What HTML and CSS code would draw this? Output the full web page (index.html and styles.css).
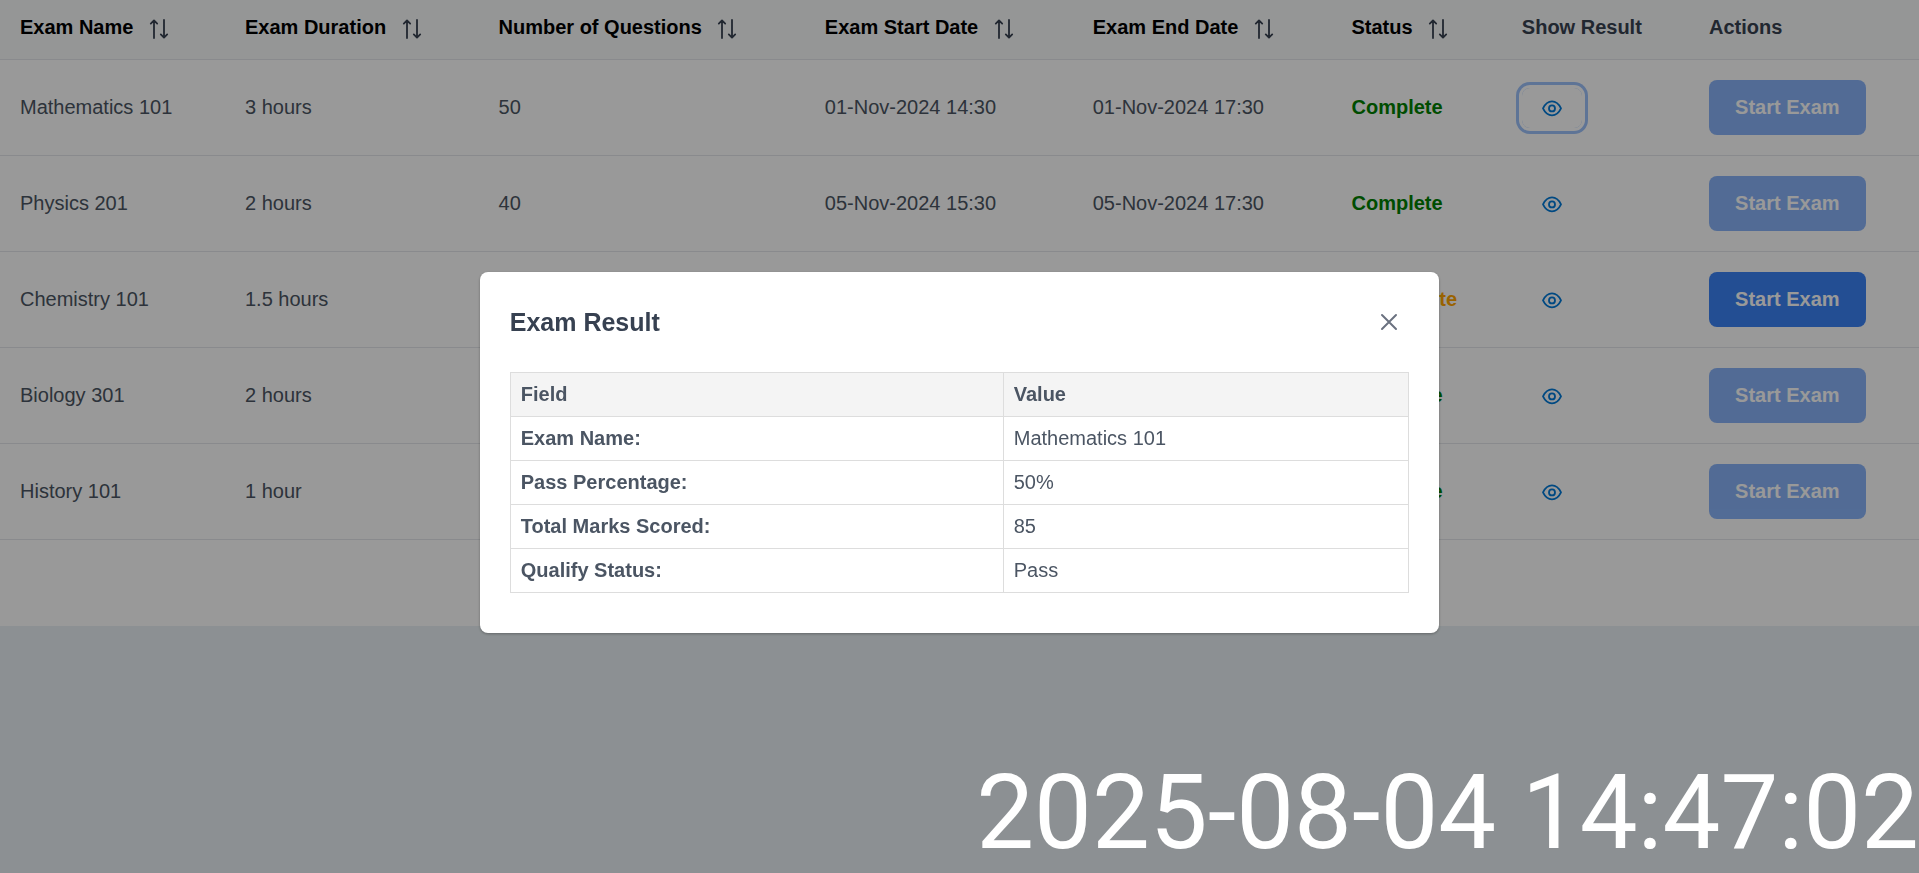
FILE: index.html
```html
<!DOCTYPE html>
<html lang="en">
<head>
    <meta charset="UTF-8">
    <meta name="viewport" content="width=device-width, initial-scale=1.0">
    <title>Exams</title>
    <link rel="stylesheet" href="styles.css">
</head>
<body>
    <!-- Shared icons -->
    <svg class="icon-defs" aria-hidden="true">
        <symbol id="icon-sort" viewBox="0 0 20 20">
            <path d="M5 19V1.6M1.8 4.6L5 1.4L8.2 4.6M15 1V18.4M11.8 15.4L15 18.6L18.2 15.4"/>
        </symbol>
        <symbol id="icon-eye" viewBox="0 0 20 20">
            <path d="M1 10.4C3.2 5.8 6.4 3.4 10 3.4S16.8 5.8 19 10.4C16.8 15 13.6 17.4 10 17.4S3.2 15 1 10.4Z"/>
            <circle cx="10" cy="10.4" r="3"/>
        </symbol>
        <symbol id="icon-close" viewBox="0 0 20 20">
            <path d="M3 3L17 17M17 3L3 17"/>
        </symbol>
    </svg>

    <!-- Exam list -->
    <main class="exam-list">
        <table class="exam-table">
            <thead>
                <tr>
                    <th class="sortable">Exam Name <svg class="sort-icon"><use href="#icon-sort"/></svg></th>
                    <th class="sortable">Exam Duration <svg class="sort-icon"><use href="#icon-sort"/></svg></th>
                    <th class="sortable">Number of Questions <svg class="sort-icon"><use href="#icon-sort"/></svg></th>
                    <th class="sortable">Exam Start Date <svg class="sort-icon"><use href="#icon-sort"/></svg></th>
                    <th class="sortable">Exam End Date <svg class="sort-icon"><use href="#icon-sort"/></svg></th>
                    <th class="sortable">Status <svg class="sort-icon"><use href="#icon-sort"/></svg></th>
                    <th>Show Result</th>
                    <th>Actions</th>
                </tr>
            </thead>
            <tbody>
                <tr>
                    <td>Mathematics 101</td>
                    <td>3 hours</td>
                    <td>50</td>
                    <td>01-Nov-2024 14:30</td>
                    <td>01-Nov-2024 17:30</td>
                    <td class="status complete">Complete</td>
                    <td><button class="view-button active" aria-label="Show result"><svg class="eye-icon"><use href="#icon-eye"/></svg></button></td>
                    <td><button class="start-button" disabled>Start Exam</button></td>
                </tr>
                <tr>
                    <td>Physics 201</td>
                    <td>2 hours</td>
                    <td>40</td>
                    <td>05-Nov-2024 15:30</td>
                    <td>05-Nov-2024 17:30</td>
                    <td class="status complete">Complete</td>
                    <td><button class="view-button" aria-label="Show result"><svg class="eye-icon"><use href="#icon-eye"/></svg></button></td>
                    <td><button class="start-button" disabled>Start Exam</button></td>
                </tr>
                <tr>
                    <td>Chemistry 101</td>
                    <td>1.5 hours</td>
                    <td>30</td>
                    <td>10-Nov-2024 14:30</td>
                    <td>10-Nov-2024 16:00</td>
                    <td class="status incomplete">Incomplete</td>
                    <td><button class="view-button" aria-label="Show result"><svg class="eye-icon"><use href="#icon-eye"/></svg></button></td>
                    <td><button class="start-button">Start Exam</button></td>
                </tr>
                <tr>
                    <td>Biology 301</td>
                    <td>2 hours</td>
                    <td>45</td>
                    <td>12-Nov-2024 14:30</td>
                    <td>12-Nov-2024 16:30</td>
                    <td class="status complete">Complete</td>
                    <td><button class="view-button" aria-label="Show result"><svg class="eye-icon"><use href="#icon-eye"/></svg></button></td>
                    <td><button class="start-button" disabled>Start Exam</button></td>
                </tr>
                <tr>
                    <td>History 101</td>
                    <td>1 hour</td>
                    <td>25</td>
                    <td>15-Nov-2024 14:30</td>
                    <td>15-Nov-2024 15:30</td>
                    <td class="status complete">Complete</td>
                    <td><button class="view-button" aria-label="Show result"><svg class="eye-icon"><use href="#icon-eye"/></svg></button></td>
                    <td><button class="start-button" disabled>Start Exam</button></td>
                </tr>
            </tbody>
        </table>
    </main>

    <!-- Result dialog -->
    <div class="overlay">
        <div class="dialog" role="dialog" aria-modal="true" aria-labelledby="dialogTitle">
            <div class="dialog-header">
                <h2 id="dialogTitle">Exam Result</h2>
                <button class="close-button" aria-label="Close"><svg class="close-icon"><use href="#icon-close"/></svg></button>
            </div>
            <table class="result-table">
                <thead>
                    <tr><th>Field</th><th>Value</th></tr>
                </thead>
                <tbody>
                    <tr><td><strong>Exam Name:</strong></td><td>Mathematics 101</td></tr>
                    <tr><td><strong>Pass Percentage:</strong></td><td>50%</td></tr>
                    <tr><td><strong>Total Marks Scored:</strong></td><td>85</td></tr>
                    <tr><td><strong>Qualify Status:</strong></td><td>Pass</td></tr>
                </tbody>
            </table>
        </div>
    </div>

    <time class="timestamp" datetime="2025-08-04T14:47:02">2025-08-04 14:47:02</time>
</body>
</html>
```

FILE: styles.css
```css
body {
    margin: 0;
    background-color: #e9f1f5;
    color: #4b5563;
    font-family: Arial, "Liberation Sans", sans-serif;
    font-size: 20px;
    overflow: hidden;
}
button {
    font-family: inherit;
    font-size: 20px;
    border: none;
    border-radius: 8px;
    cursor: pointer;
}
svg {
    fill: none;
    stroke: currentColor;
    stroke-linecap: round;
    stroke-linejoin: round;
}
.icon-defs {
    display: none;
}

/* Exam list */
.exam-list {
    background-color: #fff;
    padding-bottom: 86px;
}
.exam-table {
    width: 100%;
    border-collapse: separate;
    border-spacing: 0;
}
.exam-table th,
.exam-table td {
    padding: 20px;
    text-align: left;
    border-bottom: 1px solid #e5e7eb;
    white-space: nowrap;
}
.exam-table th {
    padding-top: 16px;
    background-color: #f9fafb;
    color: #374151;
    font-weight: bold;
}
.exam-table th.sortable {
    color: #000;
}
.sort-icon {
    width: 20px;
    height: 20px;
    margin-left: 10px;
    color: #374151;
    stroke-width: 1.8;
    vertical-align: middle;
}
.status {
    font-weight: bold;
}
.complete {
    color: green;
}
.incomplete {
    color: orange;
}
.view-button {
    display: block;
    padding: 10px 20px;
    background-color: transparent;
    color: #007ad9;
    line-height: 0;
}
.view-button.active {
    box-shadow: 0 0 0 3px #fff, 0 0 0 6px #9dc1fb;
}
.eye-icon {
    width: 20px;
    height: 20px;
    stroke-width: 1.8;
}
.start-button {
    display: block;
    padding: 16px 26px;
    background-color: #3b82f6;
    color: #fff;
    font-weight: bold;
    line-height: 23px;
}
.start-button:disabled {
    opacity: 0.6;
    cursor: default;
}

/* Result dialog */
.overlay {
    position: fixed;
    inset: 0;
    display: flex;
    align-items: center;
    justify-content: center;
    padding-top: 32px;
    background-color: rgba(0, 0, 0, 0.4);
}
.dialog {
    box-sizing: border-box;
    width: 50%;
    padding: 30px 30px 40px;
    background-color: #fff;
    border-radius: 8px;
    box-shadow: 0 1px 3px rgba(0, 0, 0, 0.3);
}
.dialog-header {
    display: flex;
    align-items: center;
    justify-content: space-between;
    margin-bottom: 30px;
}
.dialog-header h2 {
    margin: 0;
    color: #374151;
    font-size: 25px;
}
.close-button {
    width: 40px;
    height: 40px;
    padding: 10px;
    background-color: transparent;
    color: #6b7280;
    line-height: 0;
}
.close-icon {
    width: 20px;
    height: 20px;
    stroke-width: 2;
}
.result-table {
    width: 100%;
    border-collapse: collapse;
}
.result-table th,
.result-table td {
    padding: 10px;
    text-align: left;
    border: 1px solid #ddd;
}
.result-table th {
    background-color: #f4f4f4;
}

.timestamp {
    position: fixed;
    right: 0;
    bottom: 0;
    color: #fff;
    font-family: Roboto, sans-serif;
    font-size: 103px;
}
```
